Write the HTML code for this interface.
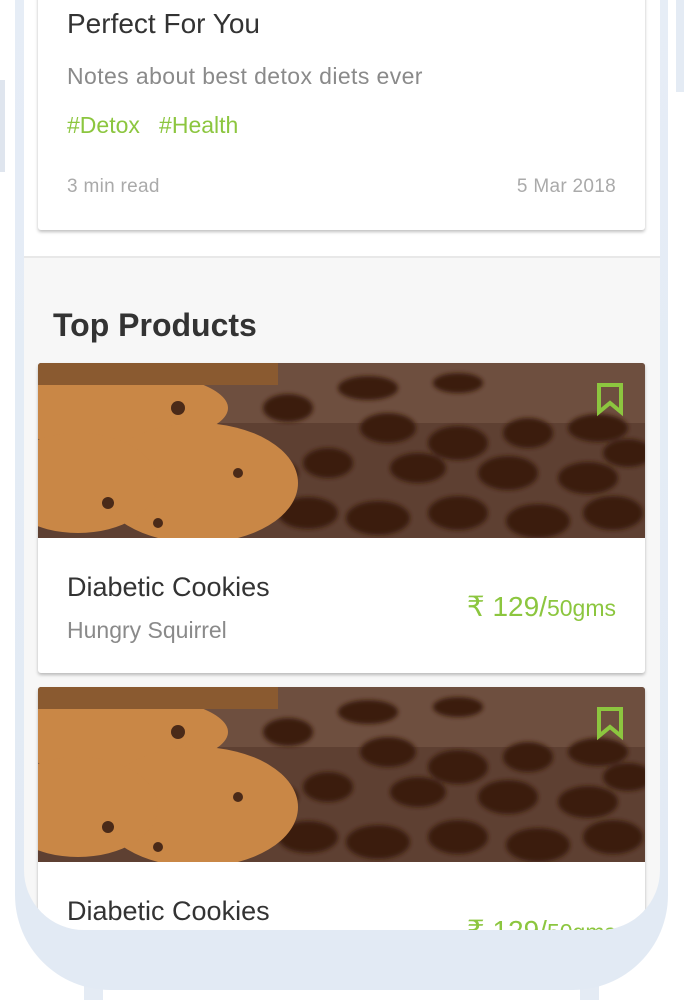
<!DOCTYPE html>
<html><head><meta charset="utf-8"><style>
*{margin:0;padding:0;box-sizing:border-box}
body{width:684px;height:1005px;overflow:hidden;background:#fff;font-family:"Liberation Sans",sans-serif;position:relative}
.abs{position:absolute}
.frame{left:15px;top:-60px;width:653px;height:1050px;background:linear-gradient(#e6edf6,#e2eaf4);border-radius:0 0 95px 95px}
.screen{left:24px;top:-60px;width:636px;height:990px;background:#f7f7f7;border-radius:0 0 60px 60px;overflow:hidden}
.card{position:absolute;background:#fff;box-shadow:0 2px 3px rgba(0,0,0,.25);border-radius:3px}
.t{position:absolute;white-space:nowrap;line-height:1}
</style></head><body>
<div class="abs" style="left:84px;top:985px;width:19px;height:15px;background:#e4ebf4"></div>
<div class="abs" style="left:580px;top:985px;width:19px;height:15px;background:#e4ebf4"></div>
<div class="abs" style="left:0;top:80px;width:5px;height:92px;background:#dfe5ee"></div>
<div class="abs" style="left:676px;top:0;width:8px;height:92px;background:#e4ebf4"></div>
<div class="abs frame"></div>
<div class="abs screen">
 <div class="abs" style="left:0;top:60px;width:636px;height:258px;background:#fff;border-bottom:2px solid #e8e8e8"></div>
 <div class="card" style="left:14px;top:50px;width:607px;height:240px">
  <div class="t" style="left:29px;top:20px;font-size:28px;color:#333">Perfect For You</div>
  <div class="t" style="left:29px;top:75px;font-size:23px;letter-spacing:.4px;color:#8a8a8a">Notes about best detox diets ever</div>
  <div class="t" style="left:29px;top:124px;font-size:23px;color:#8cc63f">#Detox&nbsp;&nbsp;&nbsp;#Health</div>
  <div class="t" style="left:29px;top:187px;font-size:19px;letter-spacing:.3px;color:#aaa">3 min read</div>
  <div class="t" style="right:29px;top:187px;font-size:19px;letter-spacing:.3px;color:#aaa">5 Mar 2018</div>
 </div>
 <div class="t" style="left:29px;top:369px;font-size:32px;font-weight:bold;color:#333">Top Products</div>

 <svg width="0" height="0" style="position:absolute"><defs>
  <filter id="bl"><feGaussianBlur stdDeviation="2"/></filter>
  <g id="img">
   <rect width="607" height="175" fill="#5e4032"/>
   <rect width="607" height="60" fill="#7a5a48" opacity=".6"/>
   <g fill="#3b1a10" filter="url(#bl)">
    <ellipse cx="330" cy="25" rx="30" ry="12"/><ellipse cx="420" cy="20" rx="25" ry="10"/>
    <ellipse cx="250" cy="45" rx="25" ry="14"/><ellipse cx="350" cy="65" rx="28" ry="15"/>
    <ellipse cx="420" cy="80" rx="30" ry="17"/><ellipse cx="490" cy="70" rx="25" ry="15"/>
    <ellipse cx="560" cy="65" rx="30" ry="14"/><ellipse cx="290" cy="100" rx="25" ry="15"/>
    <ellipse cx="380" cy="105" rx="28" ry="15"/><ellipse cx="470" cy="110" rx="30" ry="17"/>
    <ellipse cx="550" cy="115" rx="30" ry="16"/><ellipse cx="590" cy="90" rx="25" ry="14"/>
    <ellipse cx="270" cy="150" rx="30" ry="16"/><ellipse cx="340" cy="155" rx="32" ry="17"/>
    <ellipse cx="420" cy="150" rx="30" ry="17"/><ellipse cx="500" cy="158" rx="32" ry="17"/>
    <ellipse cx="575" cy="150" rx="30" ry="17"/><ellipse cx="240" cy="110" rx="20" ry="12"/>
   </g>
   <g fill="#c98746">
    <ellipse cx="70" cy="45" rx="120" ry="38"/>
    <ellipse cx="160" cy="120" rx="100" ry="60"/>
    <ellipse cx="40" cy="120" rx="80" ry="50"/>
   </g>
   <rect width="240" height="22" fill="#8a5a30"/>
   <g fill="#4a2a18"><circle cx="140" cy="45" r="7"/><circle cx="70" cy="140" r="6"/><circle cx="120" cy="160" r="5"/><circle cx="200" cy="110" r="5"/></g>
   <path d="M561 22h22v27l-11-9-11 9z" fill="none" stroke="#8cc63f" stroke-width="4"/>
  </g>
 </defs></svg>

 <div class="card" style="left:14px;top:423px;width:607px;height:310px;overflow:hidden">
  <svg width="607" height="175"><use href="#img"/></svg>
  <div class="t" style="left:29px;top:211px;font-size:27px;color:#333">Diabetic Cookies</div>
  <div class="t" style="left:29px;top:256px;font-size:23px;color:#8a8a8a">Hungry Squirrel</div>
  <div class="t" style="right:29px;top:230px;font-size:28px;color:#8cc63f">₹ 129/<span style="font-size:23px">50gms</span></div>
 </div>
 <div class="card" style="left:14px;top:747px;width:607px;height:310px;overflow:hidden">
  <svg width="607" height="175"><use href="#img"/></svg>
  <div class="t" style="left:29px;top:211px;font-size:27px;color:#333">Diabetic Cookies</div>
  <div class="t" style="right:29px;top:230px;font-size:28px;color:#8cc63f">₹ 129/<span style="font-size:23px">50gms</span></div>
 </div>
</div>
</body></html>
